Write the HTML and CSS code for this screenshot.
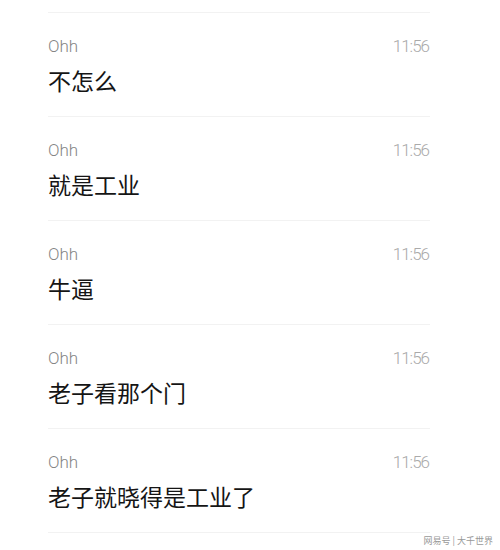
FILE: index.html
```html
<!DOCTYPE html>
<html lang="zh">
<head>
    <meta charset="UTF-8">
    <meta name="viewport" content="width=device-width, initial-scale=1.0">
    <title>消息</title>
    <link rel="stylesheet" href="styles.css">
</head>
<body>
    <div class="list">
        <div class="item">
            <div class="head">
                <span class="name">Ohh</span>
                <span class="time">11:56</span>
            </div>
            <div class="msg">不怎么</div>
        </div>
        <div class="item">
            <div class="head">
                <span class="name">Ohh</span>
                <span class="time">11:56</span>
            </div>
            <div class="msg">就是工业</div>
        </div>
        <div class="item">
            <div class="head">
                <span class="name">Ohh</span>
                <span class="time">11:56</span>
            </div>
            <div class="msg">牛逼</div>
        </div>
        <div class="item">
            <div class="head">
                <span class="name">Ohh</span>
                <span class="time">11:56</span>
            </div>
            <div class="msg">老子看那个门</div>
        </div>
        <div class="item">
            <div class="head">
                <span class="name">Ohh</span>
                <span class="time">11:56</span>
            </div>
            <div class="msg">老子就晓得是工业了</div>
        </div>
    </div>

    <!-- 水印 -->
    <div class="mark">网易号 | 大千世界</div>
</body>
</html>
```

FILE: styles.css
```css
body {
    margin: 0;
    background-color: #fff;
    font-family: Roboto, "Noto Sans CJK SC", sans-serif;
    position: relative;
    height: 550px;
    overflow: hidden;
}

.list {
    margin-left: 48px;
    width: 382px;
    padding-top: 12px;
}

.item {
    border-top: 1px solid #f2f2f2;
    padding-top: 21px;
    padding-bottom: 20px;
}

.item:last-child {
    border-bottom: 1px solid #f2f2f2;
}

.head {
    display: flex;
    justify-content: space-between;
    align-items: baseline;
    height: 24px;
    line-height: 24px;
    margin-bottom: 6px;
}

.name {
    font-size: 17px;
    font-weight: 300;
    color: #858585;
}

.time {
    font-size: 17px;
    font-weight: 300;
    letter-spacing: -1px;
    color: #aaa;
    margin-right: 1px;
}

.msg {
    font-family: "Noto Sans CJK SC", sans-serif;
    font-size: 23px;
    line-height: 32px;
    color: #151515;
}

.mark {
    position: absolute;
    right: 7px;
    bottom: 3px;
    font-family: "Noto Sans CJK SC", sans-serif;
    font-size: 9px;
    color: #999;
}
```
